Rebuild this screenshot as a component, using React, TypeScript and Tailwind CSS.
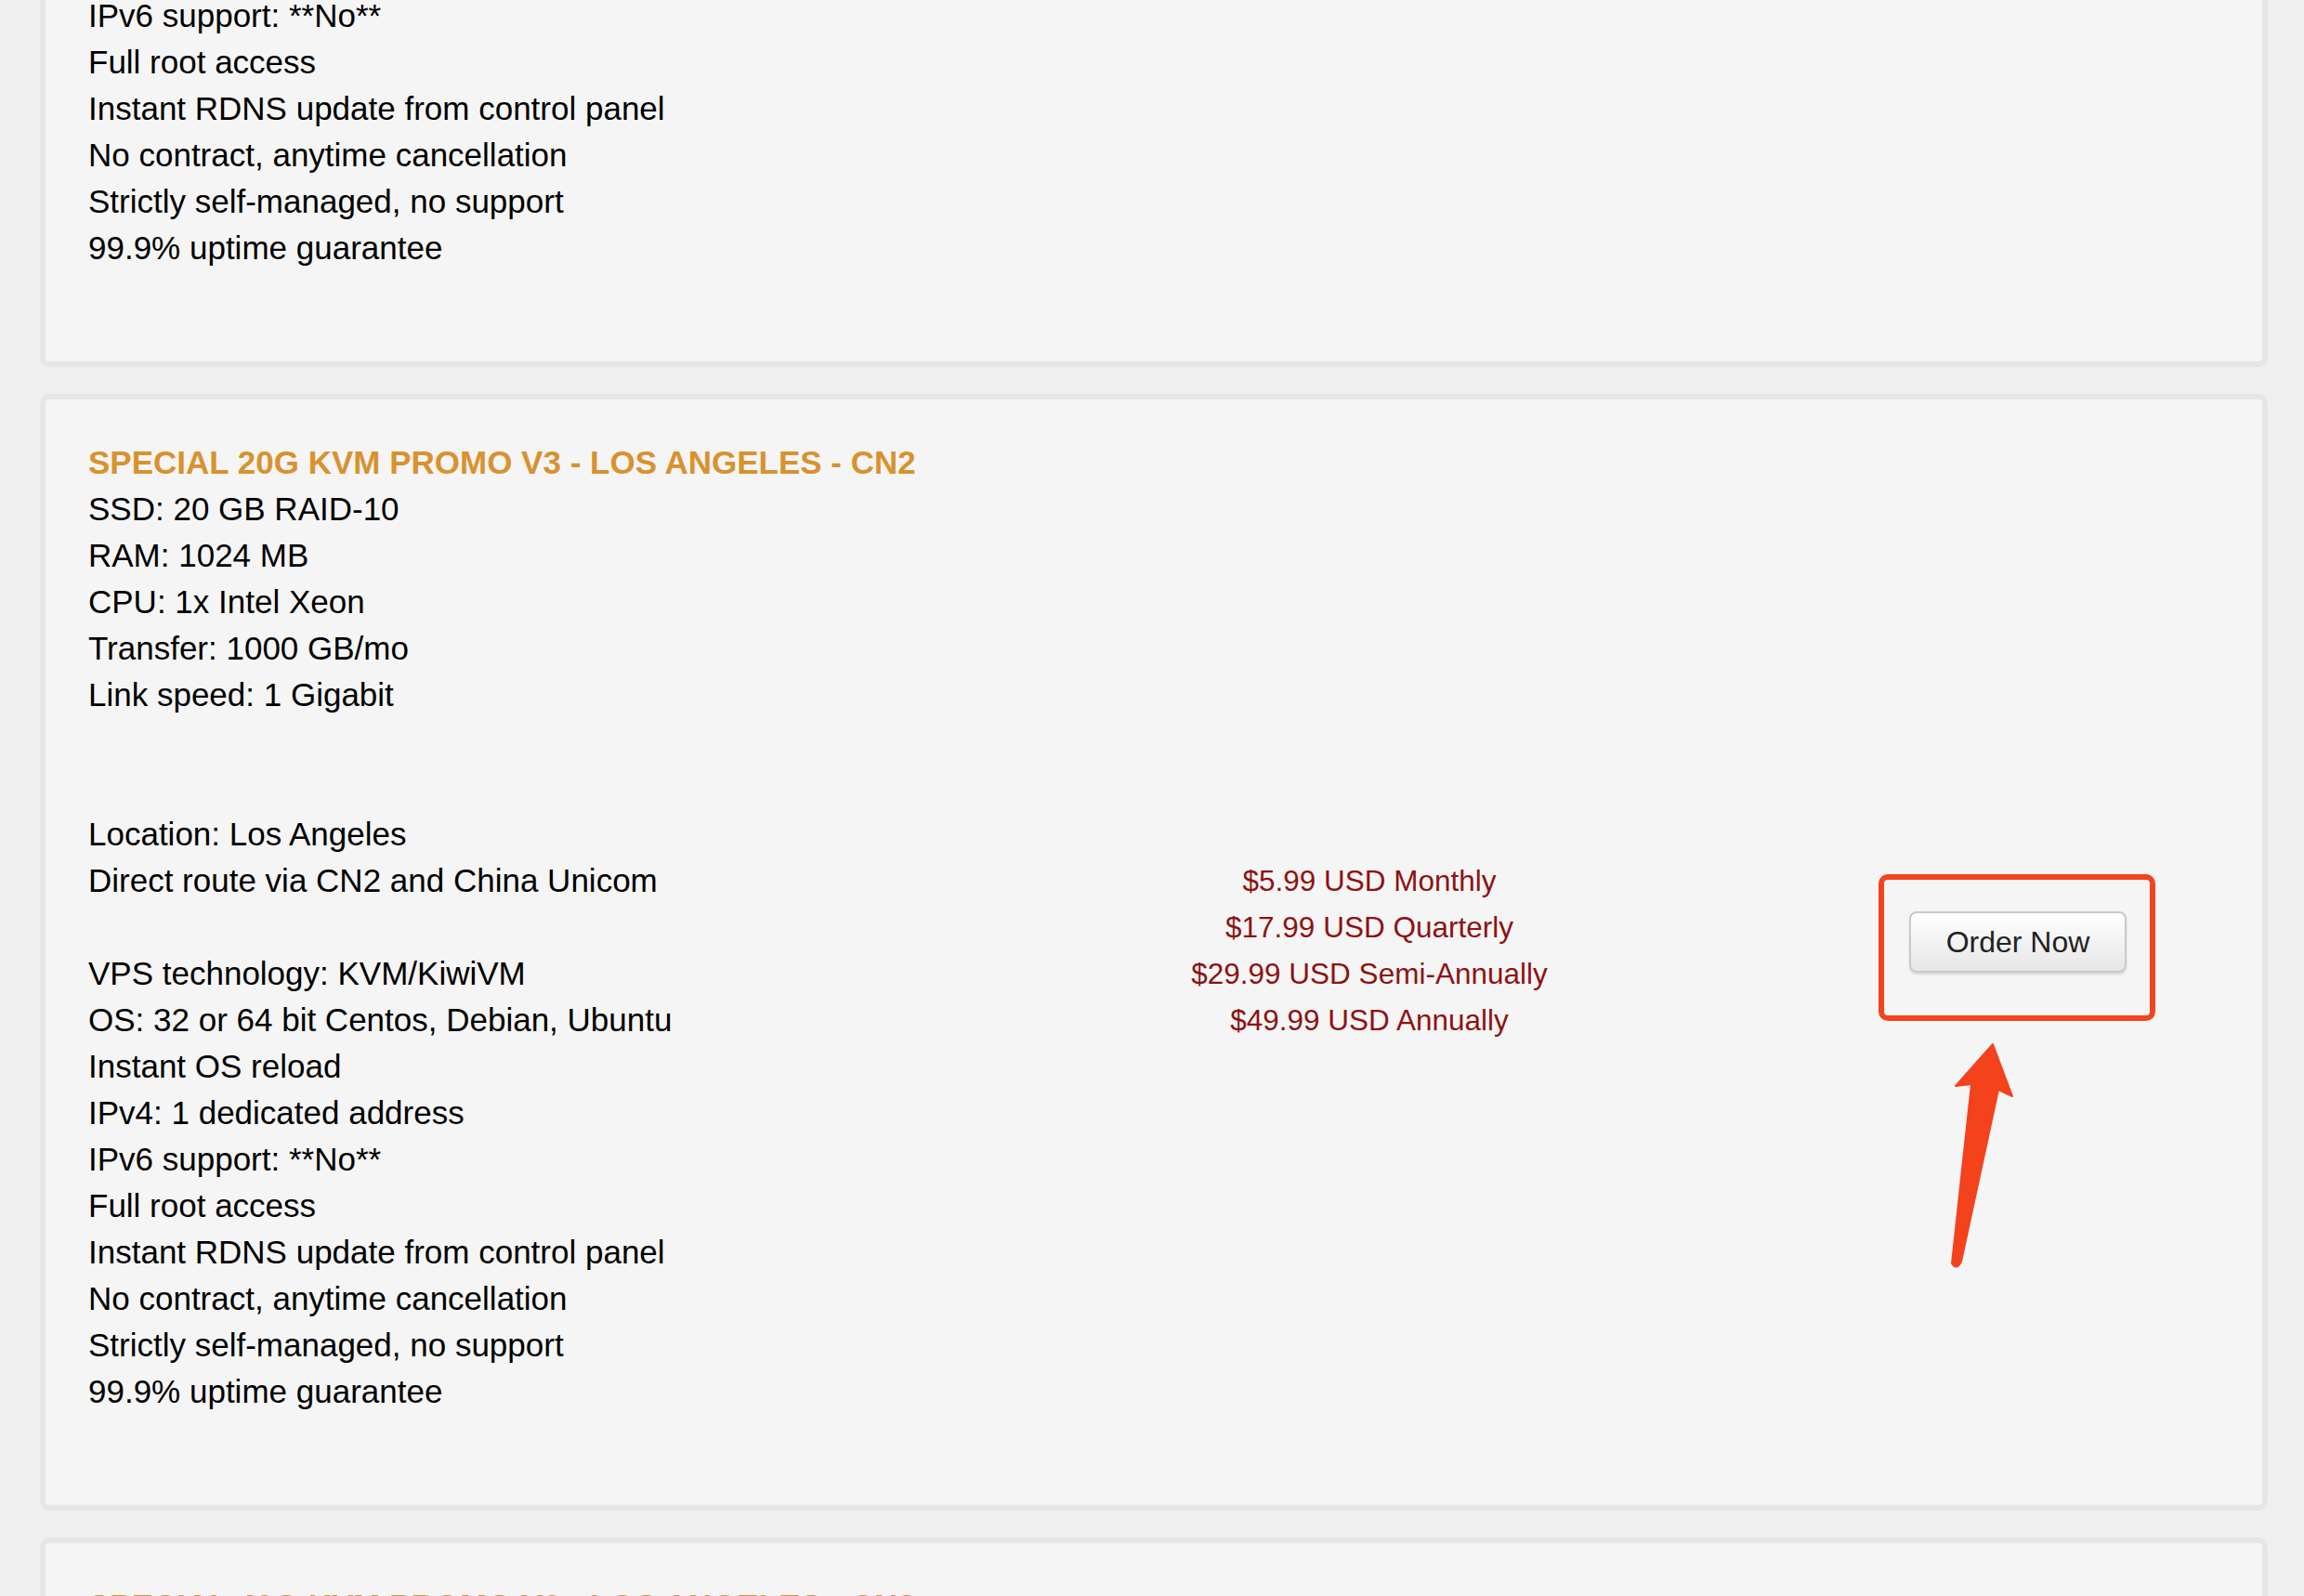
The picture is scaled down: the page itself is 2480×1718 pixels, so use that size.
import React from "react";

type Plan = {
  title: string;
  specs: string[];
  prices: string[];
  annotated?: boolean;
};

const features = [
  "Location: Los Angeles",
  "Direct route via CN2 and China Unicom",
  "",
  "VPS technology: KVM/KiwiVM",
  "OS: 32 or 64 bit Centos, Debian, Ubuntu",
  "Instant OS reload",
  "IPv4: 1 dedicated address",
  "IPv6 support: **No**",
  "Full root access",
  "Instant RDNS update from control panel",
  "No contract, anytime cancellation",
  "Strictly self-managed, no support",
  "99.9% uptime guarantee",
];

const plans: Plan[] = [
  {
    title: "SPECIAL 10G KVM PROMO V3 - LOS ANGELES - CN2",
    specs: ["SSD: 10 GB RAID-10", "RAM: 512 MB", "CPU: 1x Intel Xeon", "Transfer: 500 GB/mo", "Link speed: 1 Gigabit"],
    prices: ["$2.99 USD Monthly", "$8.99 USD Quarterly", "$16.99 USD Semi-Annually", "$29.99 USD Annually"],
  },
  {
    title: "SPECIAL 20G KVM PROMO V3 - LOS ANGELES - CN2",
    specs: ["SSD: 20 GB RAID-10", "RAM: 1024 MB", "CPU: 1x Intel Xeon", "Transfer: 1000 GB/mo", "Link speed: 1 Gigabit"],
    prices: ["$5.99 USD Monthly", "$17.99 USD Quarterly", "$29.99 USD Semi-Annually", "$49.99 USD Annually"],
    annotated: true,
  },
  {
    title: "SPECIAL 40G KVM PROMO V3 - LOS ANGELES - CN2",
    specs: ["SSD: 40 GB RAID-10", "RAM: 2048 MB", "CPU: 2x Intel Xeon", "Transfer: 2000 GB/mo", "Link speed: 1 Gigabit"],
    prices: ["$11.99 USD Monthly", "$35.99 USD Quarterly", "$59.99 USD Semi-Annually", "$99.99 USD Annually"],
  },
];

function OrderButton({ annotated }: { annotated?: boolean }) {
  return (
    <div className="relative mb-[18px]">
      <button className="h-[66px] px-[38px] rounded-[8px] border-2 border-[#c9c9c9] bg-gradient-to-b from-white to-[#e6e6e6] text-[32px] leading-none text-[#222] shadow-[0_2px_2px_rgba(0,0,0,0.12)]">
        Order Now
      </button>

      {annotated && (
        <>
          {/* red highlight box */}
          <div className="absolute -left-[33px] -right-[31px] -top-[40px] -bottom-[52px] rounded-[10px] border-[6px] border-[#f4431f] pointer-events-none" />
          {/* arrow */}
          <svg
            className="absolute left-[24px] top-[129px] pointer-events-none"
            width="110"
            height="270"
            viewBox="0 0 110 270"
          >
            <path
              d="M66 14 L87 70 L72 63 L32 248 Q27 258 22 250 L43 57 L26 59 Z"
              fill="#f4421d"
              stroke="#f4421d"
              strokeWidth="2"
              strokeLinejoin="round"
            />
          </svg>
        </>
      )}
    </div>
  );
}

function PlanCard({ plan }: { plan: Plan }) {
  return (
    <div className="rounded-[10px] border-[6px] border-[#e6e6e6] bg-[#f5f5f5] pl-[46px] pt-[43px] pb-[97px]">
      <h3 className="text-[35px] leading-[50px] font-bold text-[#d8922e]">{plan.title}</h3>
      <div className="flex items-center">
        <div className="w-[1000px] text-[35px] leading-[50px] text-black">
          {plan.specs.map((s) => (
            <div key={s}>{s}</div>
          ))}
          <div className="h-[100px]" />
          {features.map((f, i) => (
            <div key={i} className="h-[50px]">
              {f}
            </div>
          ))}
        </div>
        <div className="w-[758px] text-center text-[31.5px] leading-[50px] text-[#8e1212]">
          {plan.prices.map((p) => (
            <div key={p}>{p}</div>
          ))}
        </div>
        <div className="ml-[100px] w-[438px] flex justify-center">
          <OrderButton annotated={plan.annotated} />
        </div>
      </div>
    </div>
  );
}

export default function App() {
  return (
    <div
      className="h-[1718px] overflow-hidden bg-[#efefef] pl-[43px] pr-[39px]"
      style={{ fontFamily: '"Liberation Sans", Arial, Helvetica, sans-serif' }}
    >
      <div className="flex flex-col gap-[29px] -mt-[807px]">
        {plans.map((p) => (
          <PlanCard key={p.title} plan={p} />
        ))}
      </div>
    </div>
  );
}
